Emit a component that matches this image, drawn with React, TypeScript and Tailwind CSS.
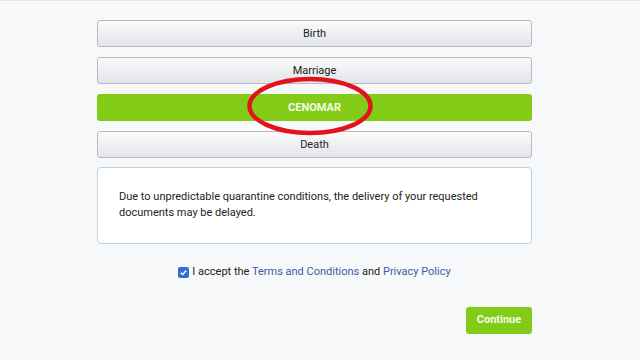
import React, { useState } from 'react';

const types = ['Birth', 'Marriage', 'CENOMAR', 'Death'];

export default function App() {
  const [selected, setSelected] = useState('CENOMAR');
  const [accepted, setAccepted] = useState(true);

  return (
    <div className="w-[640px] h-[360px] bg-[#f7f8fa] border-t border-[#e3e5e9] font-['Roboto',sans-serif] text-[#222]">
      <div className="relative w-[435px] ml-[97px] pt-[19px]">
        {/* certificate types */}
        <div className="flex flex-col gap-[10px]">
          {types.map((t) =>
            t === selected ? (
              <button
                key={t}
                onClick={() => setSelected(t)}
                className="h-[27px] pt-[2px] rounded-[3px] bg-[#82cb17] text-[11px] font-bold text-[#f4fbe6]"
              >
                {t}
              </button>
            ) : (
              <button
                key={t}
                onClick={() => setSelected(t)}
                className="h-[27px] pt-[2px] rounded-[3px] border border-[#b7bac0] bg-gradient-to-b from-[#fbfbfc] to-[#e2e4e8] text-[11px]"
              >
                {t}
              </button>
            )
          )}
        </div>

        {/* red annotation */}
        <svg className="absolute left-[150px] top-[75px] pointer-events-none" width="128" height="60" viewBox="0 0 128 60">
          <ellipse cx="63" cy="30" rx="60.5" ry="27" fill="none" stroke="#e1141d" strokeWidth="4.5" />
        </svg>

        {/* notice */}
        <div className="mt-[9px] h-[77px] rounded-[4px] border border-[#bcd2e0] bg-white pl-[21px] pt-[21px] text-[11px] leading-[16px]">
          <p>Due to unpredictable quarantine conditions, the delivery of your requested</p>
          <p>documents may be delayed.</p>
        </div>

        {/* terms */}
        <label className="mt-[20px] flex items-center justify-center gap-[3px] text-[11px] cursor-pointer">
          <span
            onClick={() => setAccepted(!accepted)}
            className={`w-[11px] h-[11px] rounded-[2px] flex items-center justify-center ${accepted ? 'bg-[#2f6fd6]' : 'bg-white border border-[#999]'}`}
          >
            {accepted && (
              <svg width="9" height="9" viewBox="0 0 10 10">
                <path d="M2 5.2 L4.2 7.3 L8 2.8" fill="none" stroke="white" strokeWidth="1.6" />
              </svg>
            )}
          </span>
          <span>
            I accept the <a className="text-[#3b5ca3]">Terms and Conditions</a> and{' '}
            <a className="text-[#3b5ca3]">Privacy Policy</a>
          </span>
        </label>

        <div className="mt-[26px] flex justify-end">
          <button className="w-[66px] h-[27px] rounded-[3px] bg-[#82cb17] text-[11px] font-bold text-[#f4fbe6]">
            Continue
          </button>
        </div>
      </div>
    </div>
  );
}
